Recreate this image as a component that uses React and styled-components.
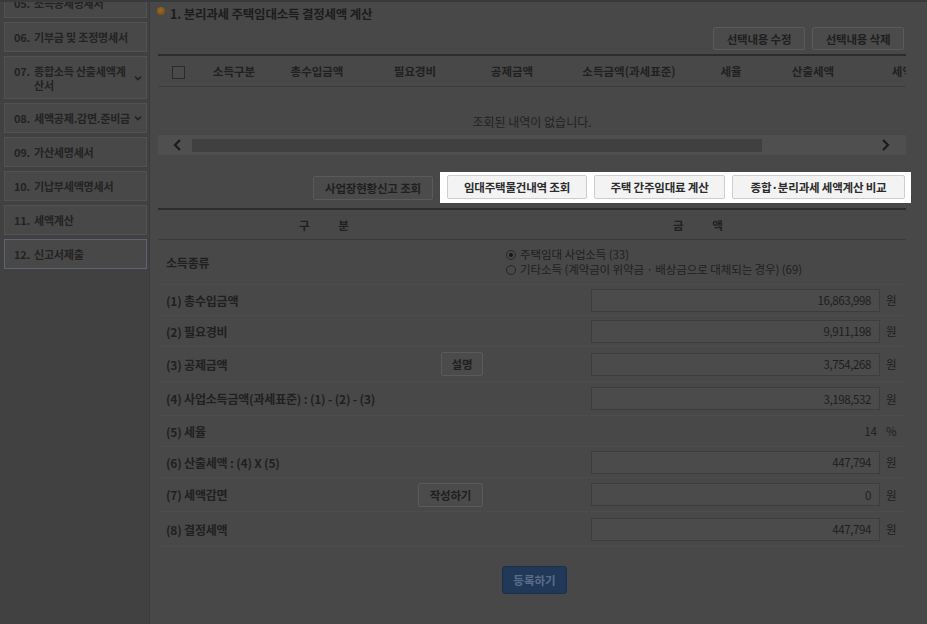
import React from "react";
import styled, { createGlobalStyle } from "styled-components";

const Global = createGlobalStyle`
  html, body { margin: 0; padding: 0; }
  body {
    background: #484848;
    font-family: "Noto Sans CJK KR", "Noto Sans", sans-serif;
    color: #1d1d1d;
    width: 927px;
    height: 624px;
    overflow: hidden;
  }
`;

const Page = styled.div`
  display: flex;
  width: 927px;
  height: 624px;
  overflow: hidden;
  border-top: 2px solid #3a3a3a;
  box-sizing: border-box;
`;

const Sidebar = styled.nav`
  width: 150px;
  flex: none;
  background: #414141;
  border-right: 1px solid #3b3b3b;
  box-sizing: border-box;
  padding-left: 4px;
  overflow: hidden;
`;

const MenuList = styled.div`
  display: flex;
  flex-direction: column;
  gap: 4px;
  margin-top: -14px;
`;

const MenuItem = styled.div`
  width: 143px;
  box-sizing: border-box;
  height: ${(p) => (p.$tall ? 43 : 30)}px;
  background: #484848;
  border: 1px solid ${(p) => (p.$active ? "#5d6472" : "#525252")};
  display: flex;
  align-items: center;
  padding: 0 4px 0 9px;
  font-size: 11px;
  font-weight: 700;
  color: #232323;
  line-height: 14px;
  letter-spacing: -0.2px;
`;

const MenuLabel = styled.span`
  display: flex;
  flex: 1;
  gap: 4px;
  white-space: ${(p) => (p.$wrap ? "normal" : "nowrap")};
`;

const MenuText = styled.span`
  max-width: ${(p) => (p.$wrap ? "100px" : "none")};
`;

const Chevron = () => (
  <svg width="8" height="6" viewBox="0 0 8 6" style={{ flex: "none" }}>
    <path d="M1 1.5 L4 4.5 L7 1.5" fill="none" stroke="#222" strokeWidth="1.6" />
  </svg>
);

const Main = styled.main`
  flex: 1;
  padding: 0 16px 0 8px;
  display: flex;
  flex-direction: column;
`;

const TitleRow = styled.div`
  display: flex;
  align-items: center;
  gap: 5px;
  height: 22px;
  font-size: 12.5px;
  font-weight: 700;
  color: #1c1c1c;
  margin-left: -1px;
  letter-spacing: -0.2px;
`;

const Dot = styled.span`
  width: 8px;
  height: 8px;
  border-radius: 50%;
  background: radial-gradient(circle at 40% 40%, #9a6a24, #6e4812);
  margin-top: -5px;
  flex: none;
`;

const Toolbar = styled.div`
  display: flex;
  justify-content: flex-end;
  gap: 7px;
  margin-top: 3px;
  padding-right: 7px;
`;

const DimButton = styled.button`
  height: ${(p) => p.$h || 23}px;
  width: ${(p) => (p.$w ? p.$w + "px" : "auto")};
  padding: 0;
  background: #4b4b4b;
  border: 1px solid #5a5a5a;
  border-radius: 2px;
  font-family: inherit;
  font-size: 11.5px;
  font-weight: 700;
  color: #1f1f1f;
  white-space: nowrap;
  letter-spacing: -0.2px;
`;

const Grid1 = styled.div`
  margin-top: 4px;
  width: 748px;
  overflow: hidden;
`;

const HeadRow = styled.div`
  display: grid;
  grid-template-columns: 40px 72px 94px 102px 92px 142px 62px 102px 98px;
  height: 33px;
  box-sizing: border-box;
  border-top: 2px solid #2c2c2c;
  border-bottom: 1px solid #3b3b3b;
  align-items: center;
  font-size: 11.5px;
  font-weight: 700;
  color: #212121;
  width: 804px;
`;

const HeadCell = styled.div`
  text-align: center;
  white-space: nowrap;
`;

const Checkbox = styled.span`
  display: inline-block;
  width: 11px;
  height: 11px;
  border: 1px solid #2a2a2a;
  background: #4a4a4a;
  vertical-align: middle;
`;

const Empty = styled.div`
  height: 48px;
  display: flex;
  align-items: flex-end;
  justify-content: center;
  padding-bottom: 5px;
  box-sizing: border-box;
  font-size: 12px;
  color: #222;
`;

const ScrollBar = styled.div`
  height: 20px;
  background: #4f4f4f;
  display: flex;
  align-items: center;
  padding: 0 16px 0 15px;
  gap: 10px;
`;

const ArrowIcon = ({ dir }) => (
  <svg width="9" height="12" viewBox="0 0 9 12" style={{ flex: "none", marginLeft: dir === "r" ? "auto" : 0 }}>
    <path
      d={dir === "l" ? "M7 1 L2 6 L7 11" : "M2 1 L7 6 L2 11"}
      fill="none"
      stroke="#1b1b1b"
      strokeWidth="2.2"
    />
  </svg>
);

const Thumb = styled.div`
  width: 570px;
  height: 13px;
  background: #404040;
`;

const ActionRow = styled.div`
  display: flex;
  justify-content: flex-end;
  align-items: center;
  gap: 7px;
  margin-top: 17px;
`;

const Highlight = styled.div`
  background: #ffffff;
  display: flex;
  gap: 7px;
  padding: 3px 6px 4px 7px;
`;

const BrightButton = styled.button`
  height: 24px;
  width: ${(p) => p.$w}px;
  padding: 0;
  background: #f3f3f3;
  border: 1px solid #cdcdcd;
  border-radius: 2px;
  font-family: inherit;
  font-size: 11.5px;
  font-weight: 700;
  color: #2c2c2c;
  white-space: nowrap;
  letter-spacing: -0.2px;
`;

const Table2 = styled.div`
  width: 748px;
  margin-top: 5px;
`;

const T2Head = styled.div`
  display: grid;
  grid-template-columns: 332px 1fr;
  height: 32px;
  box-sizing: border-box;
  border-top: 2px solid #2c2c2c;
  border-bottom: 1px solid #3b3b3b;
  align-items: center;
  font-size: 11.5px;
  font-weight: 700;
  color: #202020;
  text-align: center;
  word-spacing: 26px;
`;

const Row = styled.div`
  display: grid;
  grid-template-columns: 332px 1fr;
  height: ${(p) => p.$h}px;
  box-sizing: border-box;
  border-bottom: 1px solid #4c4c4c;
`;

const LeftCell = styled.div`
  display: flex;
  align-items: center;
  justify-content: space-between;
  padding: 0 7px 0 8px;
  font-size: 12px;
  font-weight: 700;
  color: #202020;
  letter-spacing: -0.2px;
`;

const RightCell = styled.div`
  display: flex;
  align-items: center;
  justify-content: flex-end;
  padding-right: 8px;
  gap: 6px;
`;

const RadioCell = styled.div`
  display: flex;
  flex-direction: column;
  justify-content: flex-start;
  padding: 7px 0 0 16px;
  font-size: 11.5px;
  color: #202020;
  letter-spacing: -0.1px;
`;

const RadioLine = styled.label`
  display: flex;
  align-items: center;
  gap: 4px;
  height: 15px;
  line-height: 15px;
`;

const Radio = styled.span`
  width: 10px;
  height: 10px;
  border-radius: 50%;
  border: 1px solid #262626;
  box-sizing: border-box;
  display: inline-flex;
  align-items: center;
  justify-content: center;
  &::after {
    content: "";
    width: 4px;
    height: 4px;
    border-radius: 50%;
    background: ${(p) => (p.$on ? "#161616" : "transparent")};
  }
`;

const Amount = styled.div`
  width: 289px;
  height: 23px;
  box-sizing: border-box;
  border: 1px solid #3d3d3d;
  background: #4b4b4b;
  display: flex;
  align-items: center;
  justify-content: flex-end;
  padding-right: 8px;
  font-size: 11.5px;
  color: #1e1e1e;
  letter-spacing: -0.4px;
`;

const PlainAmount = styled.div`
  font-size: 11.5px;
  color: #1e1e1e;
  padding-right: 3px;
`;

const Unit = styled.span`
  width: 12px;
  font-size: 11.5px;
  color: #1e1e1e;
`;

const Footer = styled.div`
  display: flex;
  justify-content: center;
  margin-top: 19px;
`;

const SubmitButton = styled.button`
  width: 65px;
  height: 28px;
  border: 1px solid #1c304c;
  border-radius: 3px;
  background: #223858;
  color: #5a6e8a;
  font-family: inherit;
  font-size: 11.5px;
  font-weight: 700;
`;

const menu = [
  { n: "05.", t: "소득공제명세서" },
  { n: "06.", t: "기부금 및 조정명세서" },
  { n: "07.", t: "종합소득 산출세액계산서", tall: true, chev: true },
  { n: "08.", t: "세액공제.감면.준비금", chev: true },
  { n: "09.", t: "가산세명세서" },
  { n: "10.", t: "기납부세액명세서" },
  { n: "11.", t: "세액계산" },
  { n: "12.", t: "신고서제출", active: true },
];

const heads = ["", "소득구분", "총수입금액", "필요경비", "공제금액", "소득금액(과세표준)", "세율", "산출세액", "세액공제"];

const rows = [
  { label: "(1) 총수입금액", value: "16,863,998", h: 31 },
  { label: "(2) 필요경비", value: "9,911,198", h: 31 },
  { label: "(3) 공제금액", value: "3,754,268", h: 35, btn: "설명", bw: 42 },
  { label: "(4) 사업소득금액(과세표준) : (1) - (2) - (3)", value: "3,198,532", h: 34 },
  { label: "(5) 세율", value: "14", h: 31, plain: true, unit: "%" },
  { label: "(6) 산출세액 : (4) X (5)", value: "447,794", h: 31 },
  { label: "(7) 세액감면", value: "0", h: 34, btn: "작성하기", bw: 65 },
  { label: "(8) 결정세액", value: "447,794", h: 35 },
];

export default function App() {
  return (
    <>
      <Global />
      <Page>
        <Sidebar>
          <MenuList>
            {menu.map((m) => (
              <MenuItem key={m.n} $tall={m.tall} $active={m.active}>
                <MenuLabel $wrap={m.tall}>
                  <span>{m.n}</span>
                  <MenuText $wrap={m.tall}>{m.t}</MenuText>
                </MenuLabel>
                {m.chev && <Chevron />}
              </MenuItem>
            ))}
          </MenuList>
        </Sidebar>
        <Main>
          <TitleRow>
            <Dot />
            <span>1. 분리과세 주택임대소득 결정세액 계산</span>
          </TitleRow>
          <Toolbar>
            <DimButton $w={92}>선택내용 수정</DimButton>
            <DimButton $w={92}>선택내용 삭제</DimButton>
          </Toolbar>
          <Grid1>
            <HeadRow>
              {heads.map((h, i) => (
                <HeadCell key={i}>{i === 0 ? <Checkbox /> : h}</HeadCell>
              ))}
            </HeadRow>
            <Empty>조회된 내역이 없습니다.</Empty>
            <ScrollBar>
              <ArrowIcon dir="l" />
              <Thumb />
              <ArrowIcon dir="r" />
            </ScrollBar>
          </Grid1>
          <ActionRow>
            <DimButton $w={120} $h={24}>사업장현황신고 조회</DimButton>
            <Highlight>
              <BrightButton $w={140}>임대주택물건내역 조회</BrightButton>
              <BrightButton $w={131}>주택 간주임대료 계산</BrightButton>
              <BrightButton $w={173}>종합·분리과세 세액계산 비교</BrightButton>
            </Highlight>
          </ActionRow>
          <Table2>
            <T2Head>
              <div>구 분</div>
              <div>금 액</div>
            </T2Head>
            <Row $h={45}>
              <LeftCell>소득종류</LeftCell>
              <RadioCell>
                <RadioLine>
                  <Radio $on />
                  주택임대 사업소득 (33)
                </RadioLine>
                <RadioLine>
                  <Radio />
                  기타소득 (계약금이 위약금 · 배상금으로 대체되는 경우) (69)
                </RadioLine>
              </RadioCell>
            </Row>
            {rows.map((r) => (
              <Row key={r.label} $h={r.h}>
                <LeftCell>
                  <span>{r.label}</span>
                  {r.btn && <DimButton $w={r.bw} $h={24}>{r.btn}</DimButton>}
                </LeftCell>
                <RightCell>
                  {r.plain ? (
                    <PlainAmount>{r.value}</PlainAmount>
                  ) : (
                    <Amount>{r.value}</Amount>
                  )}
                  <Unit>{r.unit || "원"}</Unit>
                </RightCell>
              </Row>
            ))}
          </Table2>
          <Footer>
            <SubmitButton>등록하기</SubmitButton>
          </Footer>
        </Main>
      </Page>
    </>
  );
}
